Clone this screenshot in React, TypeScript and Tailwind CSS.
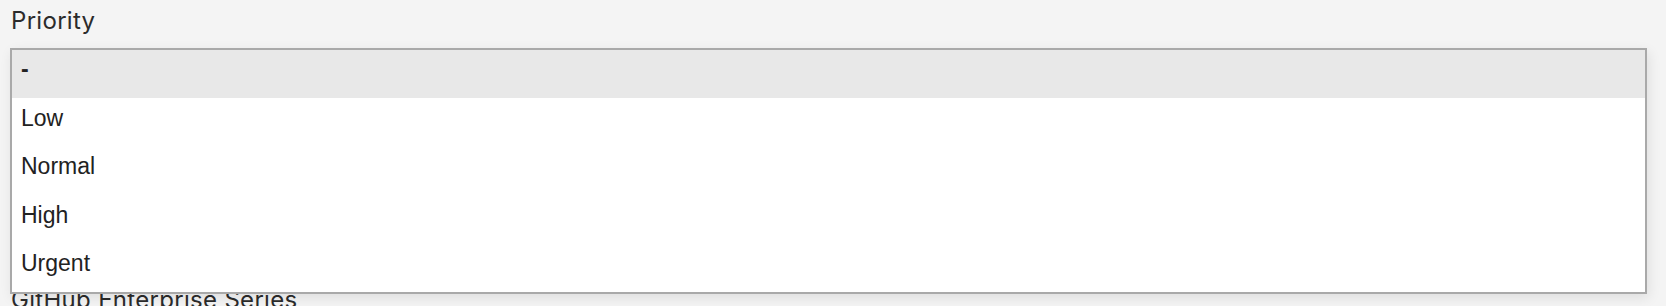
import React from 'react';

const PRIORITIES = ['-', 'Low', 'Normal', 'High', 'Urgent'];

const App: React.FC = () => {
  return (
    <div className="h-[306px] overflow-hidden bg-[#f4f4f4] px-[11px] pt-[4.5px]">
      <label className="block font-['Inter',sans-serif] text-[24px] leading-[32px] tracking-[0.3px] text-[#2b2b2b]">
        Priority
      </label>

      {/* select, opened */}
      <div className="relative mt-[11.5px] -ml-px w-[1637px]">
        <div className="h-[48px] border-2 border-[#a8a8a8] bg-white" />
        <ul className="absolute inset-x-0 top-0 z-10 border-2 border-[#a9a9a9] bg-white shadow-[2px_4px_12px_rgba(0,0,0,0.09)]">
          {PRIORITIES.map((p, i) => (
            <li
              key={p}
              className={
                i === 0
                  ? "h-[48px] bg-[#e8e8e8] px-[9px] pt-[5px] font-['Liberation_Sans',Arial,sans-serif] text-[23px] leading-[28px] font-bold text-[#222]"
                  : "h-[48.5px] px-[9px] pt-[5.5px] font-['Liberation_Sans',Arial,sans-serif] text-[23px] leading-[28px] text-[#222]"
              }
            >
              {p}
            </li>
          ))}
        </ul>
      </div>

      <label className="mt-[188px] block font-['Inter',sans-serif] text-[24px] leading-[32px] tracking-[0.3px] text-[#2b2b2b]">
        GitHub Enterprise Series
      </label>
    </div>
  );
};

export default App;
